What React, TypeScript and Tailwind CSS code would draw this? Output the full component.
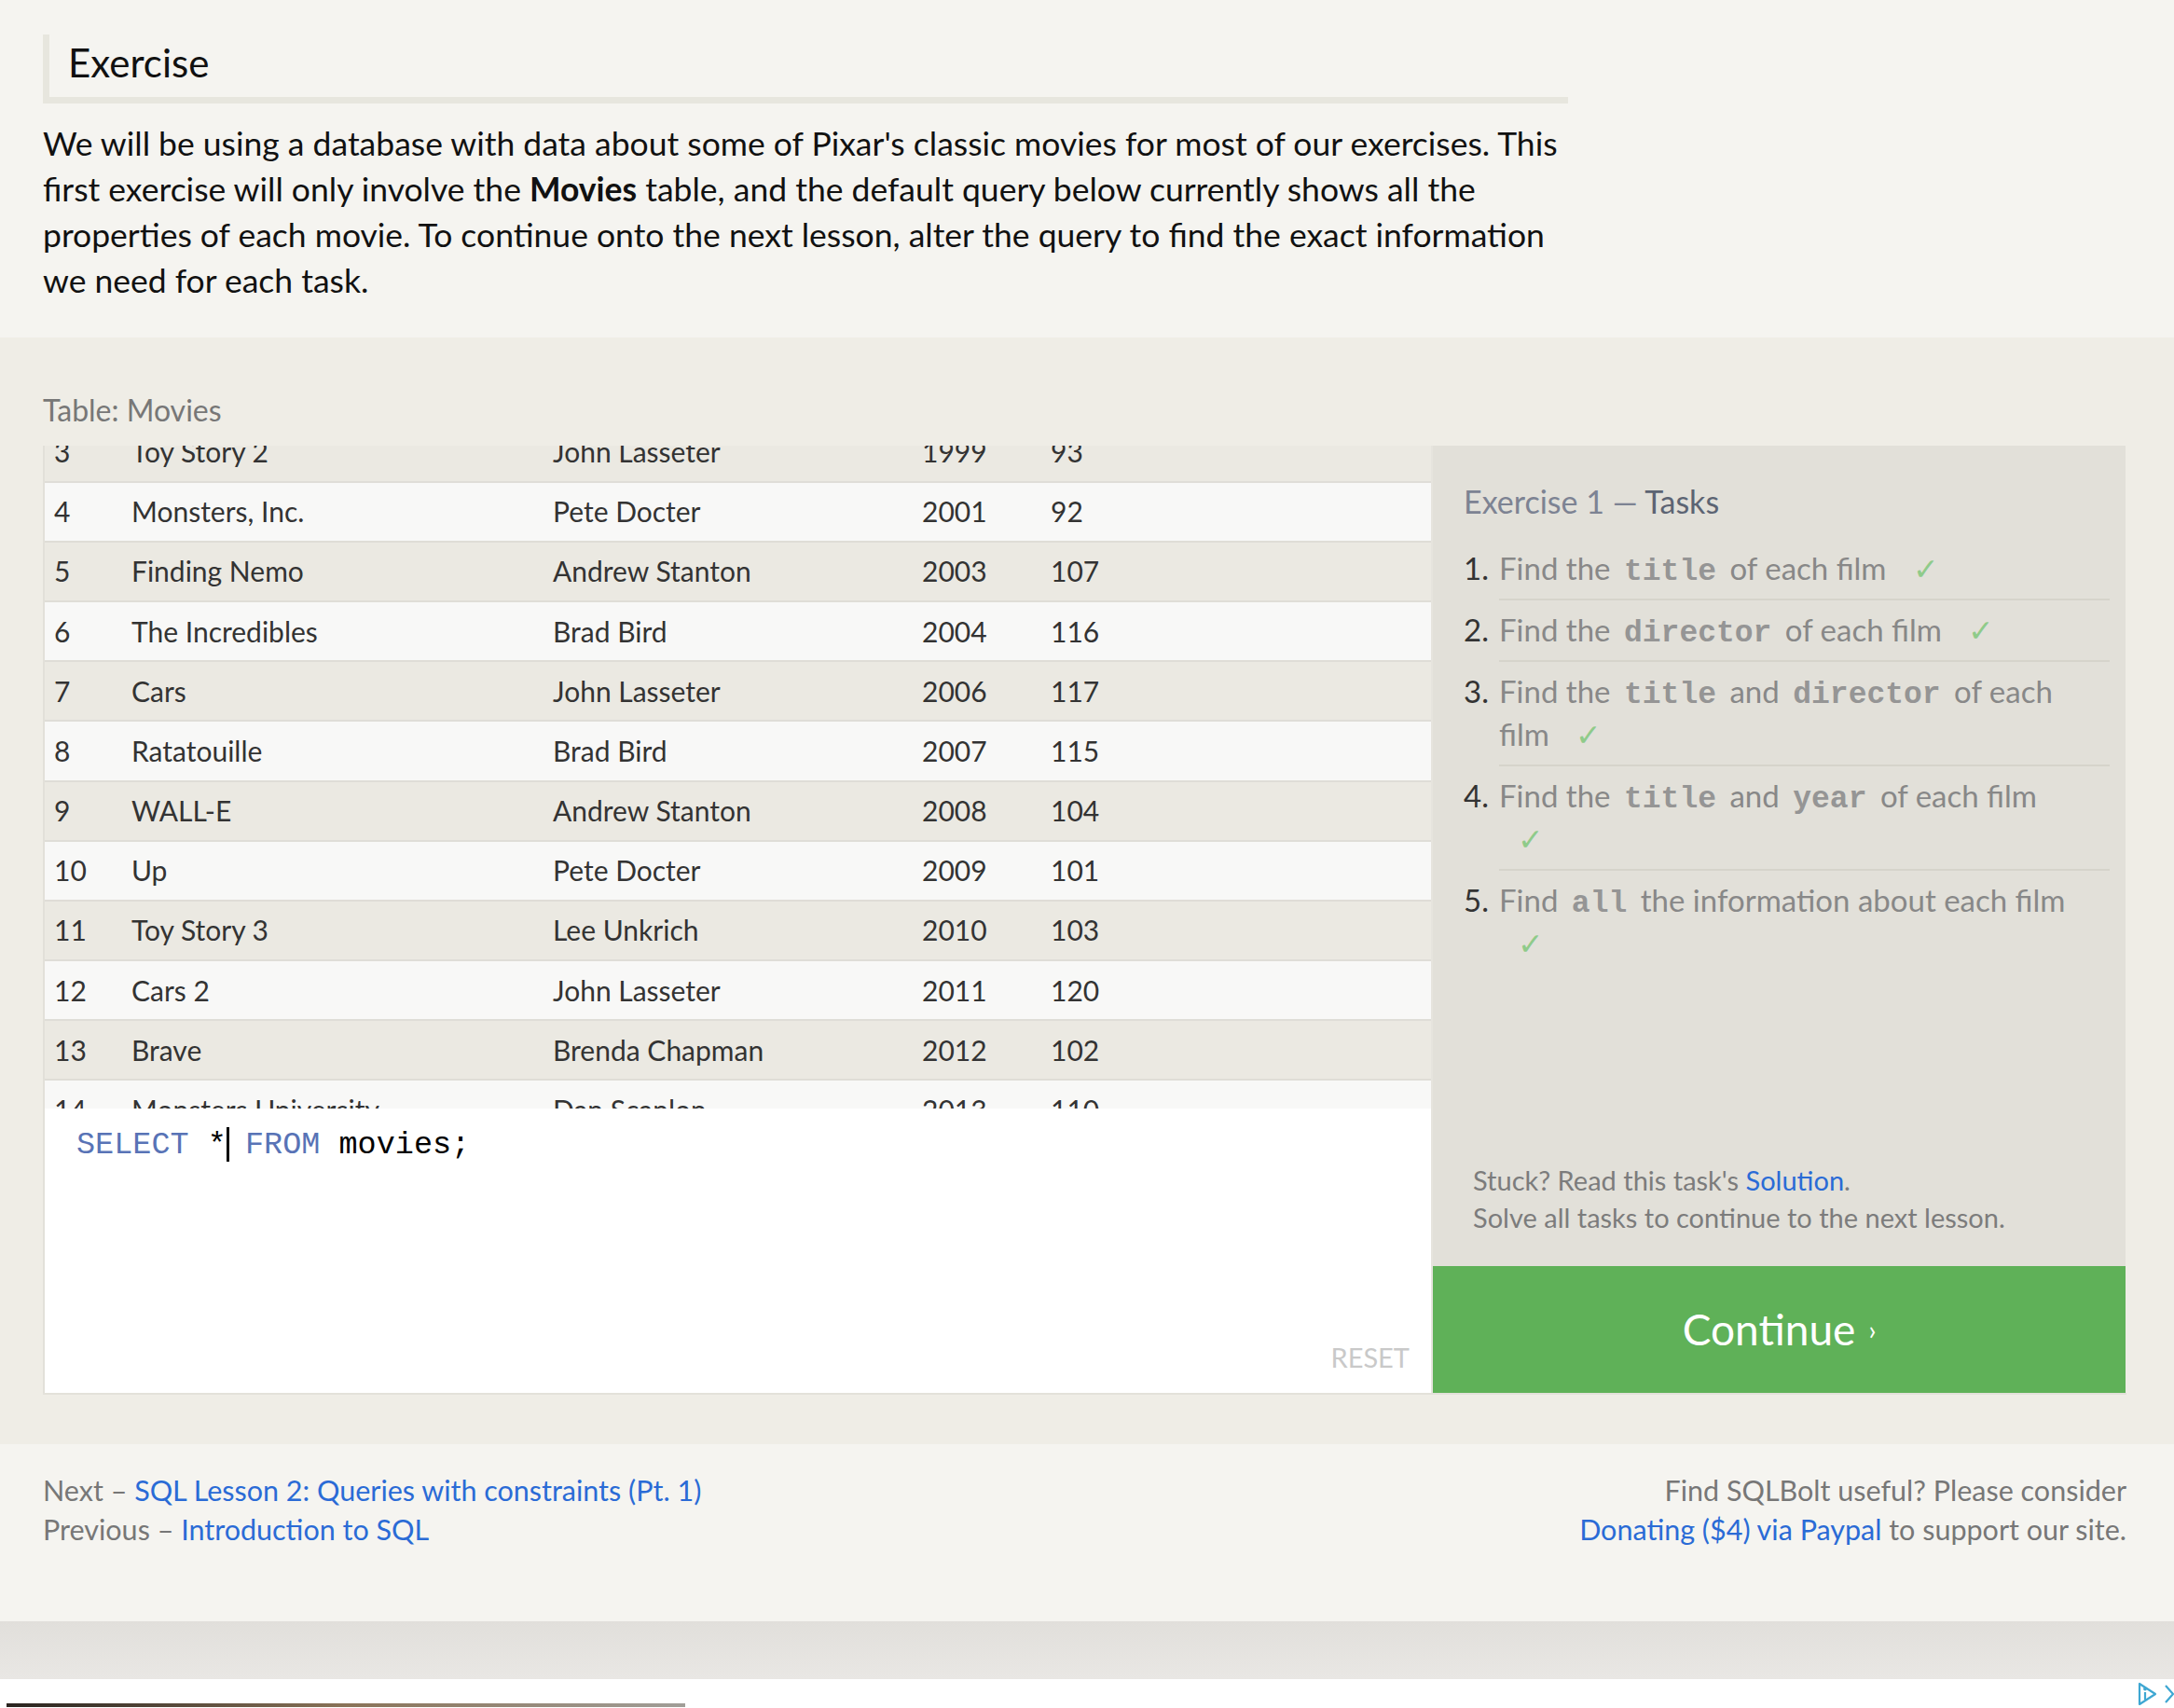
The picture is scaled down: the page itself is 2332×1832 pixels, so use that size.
import React, { useLayoutEffect, useRef } from 'react';

const movies = [
    { id: 1, title: 'Toy Story', director: 'John Lasseter', year: 1995, length: 81 },
    { id: 2, title: "A Bug's Life", director: 'John Lasseter', year: 1998, length: 95 },
    { id: 3, title: 'Toy Story 2', director: 'John Lasseter', year: 1999, length: 93 },
    { id: 4, title: 'Monsters, Inc.', director: 'Pete Docter', year: 2001, length: 92 },
    { id: 5, title: 'Finding Nemo', director: 'Andrew Stanton', year: 2003, length: 107 },
    { id: 6, title: 'The Incredibles', director: 'Brad Bird', year: 2004, length: 116 },
    { id: 7, title: 'Cars', director: 'John Lasseter', year: 2006, length: 117 },
    { id: 8, title: 'Ratatouille', director: 'Brad Bird', year: 2007, length: 115 },
    { id: 9, title: 'WALL-E', director: 'Andrew Stanton', year: 2008, length: 104 },
    { id: 10, title: 'Up', director: 'Pete Docter', year: 2009, length: 101 },
    { id: 11, title: 'Toy Story 3', director: 'Lee Unkrich', year: 2010, length: 103 },
    { id: 12, title: 'Cars 2', director: 'John Lasseter', year: 2011, length: 120 },
    { id: 13, title: 'Brave', director: 'Brenda Chapman', year: 2012, length: 102 },
    { id: 14, title: 'Monsters University', director: 'Dan Scanlon', year: 2013, length: 110 },
];

const Code = ({ children }: { children: React.ReactNode }) => (
    <span className="px-[6px] font-['Liberation_Mono',monospace] text-[33px] font-bold leading-none text-[#959595]">
        {children}
    </span>
);

const Check = () => <span className="ml-[20px] inline-block w-[30px] leading-none text-[#8fcb8a]">✓</span>;

const tasks: React.ReactNode[] = [
    <>Find the <Code>title</Code> of each film <Check /></>,
    <>Find the <Code>director</Code> of each film <Check /></>,
    <>Find the <Code>title</Code> and <Code>director</Code> of each film <Check /></>,
    <>Find the <Code>title</Code> and <Code>year</Code> of each film <Check /></>,
    <>Find <Code>all</Code> the information about each film <Check /></>,
];

const AdChoices = () => (
    <svg width="40" height="26" viewBox="0 0 40 26" fill="none" stroke="#3ea7d2" strokeWidth="2.2">
        <path d="M3 2 L3 24 L20 13 Z" strokeLinejoin="round" />
        <path d="M9 11 L9 19" />
        <circle cx="9" cy="7.5" r="0.8" fill="#3ea7d2" />
        <path d="M31 4 L39 13 L31 22" />
    </svg>
);

export default function App() {
    const tableRef = useRef<HTMLDivElement>(null);

    useLayoutEffect(() => {
        // the results table is scrolled a little past the first two rows
        if (tableRef.current) tableRef.current.scrollTop = 153;
    }, []);

    return (
        <div className="font-['Lato',sans-serif] text-[#111]">

            {/* Lesson text */}
            <section className="bg-[#f5f4f0] pl-[46px] pr-[51px] pt-[37px] pb-[37px]">
                <h2 className="max-w-[1636px] border-b-[7px] border-l-[7px] border-[#e7e6de] pb-[7px] pl-[20px] text-[42px] leading-[60px]">
                    Exercise
                </h2>
                <p className="mt-[18px] max-w-[1640px] text-[35.5px] leading-[49px]">
                    We will be using a database with data about some of Pixar's classic movies for most of our exercises. This
                    first exercise will only involve the <b>Movies</b> table, and the default query below currently shows all the
                    properties of each movie. To continue onto the next lesson, alter the query to find the exact information
                    we need for each task.
                </p>
            </section>

            {/* Exercise area */}
            <section className="bg-[#efede6] pl-[46px] pr-[51px] pt-[55px] pb-[53px]">
                <div className="mb-[16px] text-[32px] leading-[45px] text-[#777]">Table: Movies</div>

                <div className="flex border-b-2 border-[#e3e1da]">
                    {/* Table + editor */}
                    <div className="flex w-[1489px] flex-col border-l-2 border-[#e2e0d9]">
                        <div ref={tableRef} className="h-[711px] overflow-hidden">
                            {movies.map((m) => (
                                <div
                                    key={m.id}
                                    className={`flex h-[64.2px] items-center border-b-2 border-[#dfddd7] text-[30px] text-[#333] ${
                                        m.id % 2 ? 'bg-[#ebe9e2]' : 'bg-[#f8f8f7]'
                                    }`}
                                >
                                    <div className="w-[83px] pl-[10px]">{m.id}</div>
                                    <div className="w-[452px] pl-[10px]">{m.title}</div>
                                    <div className="w-[396px] pl-[10px]">{m.director}</div>
                                    <div className="w-[138px] pl-[10px]">{m.year}</div>
                                    <div className="flex-1 pl-[10px]">{m.length}</div>
                                </div>
                            ))}
                        </div>

                        <div className="flex h-[305px] flex-col justify-between bg-white pb-[21px] pl-[34px] pr-[23px] pt-[19px]">
                            <div className="font-['Liberation_Mono',monospace] text-[33.5px] leading-[40px] text-black">
                                <span className="text-[#5873b6]">SELECT</span> *
                                <span className="-mr-[3px] inline-block h-[37px] w-[3px] bg-black align-[-9px]" />
                                {' '}<span className="text-[#5873b6]">FROM</span> movies;
                            </div>
                            <div className="self-end text-[29px] leading-[35px] text-[#c9c9c9]">RESET</div>
                        </div>
                    </div>

                    {/* Tasks panel */}
                    <div className="flex w-[745px] flex-col border-l-2 border-[#e6e4de]">
                        <div className="flex flex-1 flex-col bg-[#e2e0d9] pl-[33px] pt-[37px]">
                            <h3 className="text-[34px] leading-[46px] text-[#7d8393]">
                                Exercise 1 — <span className="text-[#5c6473]">Tasks</span>
                            </h3>
                            <ol className="mt-[17px]">
                                {tasks.map((t, i) => (
                                    <li key={i} className="flex text-[33px] leading-[46px]">
                                        <span className="w-[38px] shrink-0 pt-[8px] text-[#333]">{i + 1}.</span>
                                        <div
                                            className={`mr-[17px] flex-1 pb-[10px] pr-[30px] pt-[8px] text-[#888] ${
                                                i < tasks.length - 1 ? 'border-b-2 border-[#d6d4cb]' : ''
                                            }`}
                                        >
                                            {t}
                                        </div>
                                    </li>
                                ))}
                            </ol>
                            <div className="mt-auto pb-[32px] pl-[10px] text-[29px] leading-[40px] text-[#7c7c7c]">
                                Stuck? Read this task's <span className="text-[#2a6bd6]">Solution</span>.
                                <br />
                                Solve all tasks to continue to the next lesson.
                            </div>
                        </div>
                        <button className="flex h-[136px] items-center justify-center bg-[#5fb158] text-white">
                            <span className="text-[46px] leading-none">Continue</span>
                            <span className="ml-[14px] text-[28px] leading-none">›</span>
                        </button>
                    </div>
                </div>
            </section>

            {/* Lesson navigation */}
            <section className="flex justify-between bg-[#f5f4f0] pl-[46px] pr-[51px] pt-[28px] pb-[78px] text-[30.5px] leading-[42px] text-[#777]">
                <div>
                    <div>Next – <span className="text-[#2a6bd6]">SQL Lesson 2: Queries with constraints (Pt. 1)</span></div>
                    <div>Previous – <span className="text-[#2a6bd6]">Introduction to SQL</span></div>
                </div>
                <div className="text-right">
                    <div>Find SQLBolt useful? Please consider</div>
                    <div><span className="text-[#2a6bd6]">Donating ($4) via Paypal</span> to support our site.</div>
                </div>
            </section>

            <div className="h-[62px] bg-gradient-to-b from-[#e1dfdb] to-[#e9e7e4]" />

            {/* Ad slot */}
            <div className="relative flex h-[30px] items-end bg-white px-[7px]">
                <div className="h-[4px] w-[728px] bg-gradient-to-r from-[#2a241f] via-[#8a7358] to-[#a19e98]" />
                <div className="absolute right-0 top-[3px]">
                    <AdChoices />
                </div>
            </div>
        </div>
    );
}
